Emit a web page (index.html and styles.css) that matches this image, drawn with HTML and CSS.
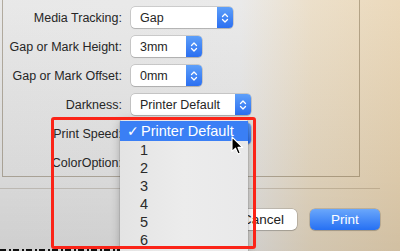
FILE: index.html
```html
<!DOCTYPE html>
<html lang="en">
  <head>
    <meta charset="UTF-8" />
    <title>Printer Features</title>
    <link rel="stylesheet" href="styles.css">
  </head>
  <body>
    <!-- Options group -->
    <div class="group">
      <div class="form-grid">
        <label>Media Tracking:</label>
        <div class="select w-gap"><span>Gap</span><i class="stepper"><svg width="8" height="12" viewBox="0 0 8 12"><path d="M1.5 4.5 L4 2 L6.5 4.5 M1.5 7.5 L4 10 L6.5 7.5" fill="none" stroke="#fff" stroke-width="1.3" stroke-linecap="round" stroke-linejoin="round"/></svg></i></div>

        <label>Gap or Mark Height:</label>
        <div class="select w-small"><span>3mm</span><i class="stepper"><svg width="8" height="12" viewBox="0 0 8 12"><path d="M1.5 4.5 L4 2 L6.5 4.5 M1.5 7.5 L4 10 L6.5 7.5" fill="none" stroke="#fff" stroke-width="1.3" stroke-linecap="round" stroke-linejoin="round"/></svg></i></div>

        <label>Gap or Mark Offset:</label>
        <div class="select w-small"><span>0mm</span><i class="stepper"><svg width="8" height="12" viewBox="0 0 8 12"><path d="M1.5 4.5 L4 2 L6.5 4.5 M1.5 7.5 L4 10 L6.5 7.5" fill="none" stroke="#fff" stroke-width="1.3" stroke-linecap="round" stroke-linejoin="round"/></svg></i></div>

        <label>Darkness:</label>
        <div class="select w-wide"><span>Printer Default</span><i class="stepper"><svg width="8" height="12" viewBox="0 0 8 12"><path d="M1.5 4.5 L4 2 L6.5 4.5 M1.5 7.5 L4 10 L6.5 7.5" fill="none" stroke="#fff" stroke-width="1.3" stroke-linecap="round" stroke-linejoin="round"/></svg></i></div>

        <!-- these two sit under the open menu -->
        <label>Print Speed:</label>
        <div class="select w-wide"><span></span><i class="stepper"></i></div>

        <label>ColorOption:</label>
        <div class="select w-hidden"><span></span><i class="stepper"></i></div>
      </div>
    </div>

    <div class="separator"></div>

    <div class="buttons">
      <button class="btn cancel">Cancel</button>
      <button class="btn primary">Print</button>
    </div>

    <div class="dashes"></div>

    <!-- Open popup menu for Print Speed -->
    <ul class="menu">
      <li class="selected"><span class="check">✓</span>Printer Default</li>
      <li>1</li>
      <li>2</li>
      <li>3</li>
      <li>4</li>
      <li>5</li>
      <li>6</li>
    </ul>

    <!-- Red highlight frame -->
    <div class="highlight"></div>

    <svg class="cursor" width="13" height="20" viewBox="0 0 13 20">
      <path d="M1 1 L1 15.5 L4.5 12.2 L7 18 L9.3 17 L6.9 11.4 L11.6 11.4 Z" fill="#000" stroke="#fff" stroke-width="1.1" stroke-linejoin="round"/>
    </svg>
  </body>
</html>
```

FILE: styles.css
```css
html,
body {
  margin: 0;
  padding: 0;
  overflow: hidden;
}
body {
  width: 400px;
  height: 251px;
  position: relative;
  font-family: "Liberation Sans", Arial, sans-serif;
  font-size: 12.5px;
  color: #262626;
  background:
    linear-gradient(to bottom, rgba(255, 255, 255, 0.1), rgba(0, 0, 0, 0.06) 70%, rgba(0, 0, 0, 0.1)),
    linear-gradient(to right, #e6e6e6 0%, #e8e8e8 60%, #eadcc4 78%, #e9d5b4 100%);
}
.group {
  box-sizing: border-box;
  margin: -10px 0 0 2px;
  width: 358px;
  height: 187px;
  border: 1px solid rgba(90, 70, 40, 0.38);
  padding-top: 16px;
}
.form-grid {
  display: grid;
  grid-template-columns: 119px auto;
  grid-auto-rows: 21px;
  column-gap: 9px;
  row-gap: 8px;
  align-items: center;
}
label {
  text-align: right;
  white-space: nowrap;
}
.select {
  box-sizing: border-box;
  height: 21px;
  background: #fff;
  border-radius: 4px;
  box-shadow: 0 0 0 0.5px rgba(0, 0, 0, 0.25), 0 1px 1px rgba(0, 0, 0, 0.12);
  display: flex;
  align-items: center;
  justify-content: space-between;
  padding-left: 9px;
}
.w-gap {
  width: 102px;
}
.w-small {
  width: 71px;
}
.w-wide {
  width: 120px;
}
.w-hidden {
  width: 100px;
}
.stepper {
  width: 16px;
  height: 21px;
  border-radius: 0 4px 4px 0;
  background: linear-gradient(to bottom, #5d9ff9, #2b6ff1);
  display: flex;
  align-items: center;
  justify-content: center;
}
.separator {
  margin-top: 11px;
  width: 380px;
  height: 1px;
  background: rgba(80, 60, 30, 0.2);
}
.buttons {
  display: flex;
  justify-content: flex-end;
  gap: 13px;
  padding-right: 20px;
  margin-top: 20px;
}
.btn {
  font-family: "Liberation Sans", Arial, sans-serif;
  font-size: 13.5px;
  height: 21px;
  border: none;
  border-radius: 5px;
  padding: 0;
  width: 70px;
  background: #fff;
  color: #222;
  box-shadow: 0 0 0 0.5px rgba(0, 0, 0, 0.25), 0 1px 1px rgba(0, 0, 0, 0.12);
}
.btn.cancel {
  width: 74px;
  padding-left: 6px;
}
.btn.primary {
  color: #fff;
  background: linear-gradient(to bottom, #6aa7fb, #2670f3);
}
.dashes {
  margin-top: 19px;
  width: 120px;
  height: 2px;
  background: repeating-linear-gradient(to right, #111 0 6px, transparent 6px 9px, #111 9px 11px, transparent 11px 13px);
}
.menu {
  position: absolute;
  left: 120px;
  top: 118px;
  width: 128px;
  height: 130px;
  margin: 0;
  padding: 3px 0 0;
  list-style: none;
  background: linear-gradient(to right, #e4e4e4, #ececec 50%, #e9e9ea);
  border-radius: 5px 5px 0 0;
  box-shadow: 0 0 0 0.5px rgba(0, 0, 0, 0.15), 0 3px 10px rgba(0, 0, 0, 0.25);
  font-size: 14.5px;
  color: #2a2a2a;
}
.menu li {
  height: 18px;
  line-height: 18px;
  padding-left: 20px;
}
.menu li.selected {
  height: 20px;
  line-height: 20px;
  padding-left: 7px;
  background: #3a7ff5;
  color: #fff;
}
.check {
  display: inline-block;
  width: 14px;
  font-family: "DejaVu Sans", sans-serif;
  font-size: 14px;
}
.highlight {
  position: absolute;
  left: 51px;
  top: 117px;
  width: 199px;
  height: 126px;
  border: 3px solid #fb2418;
  border-radius: 3px;
}
.cursor {
  position: absolute;
  left: 231px;
  top: 136px;
}
```
